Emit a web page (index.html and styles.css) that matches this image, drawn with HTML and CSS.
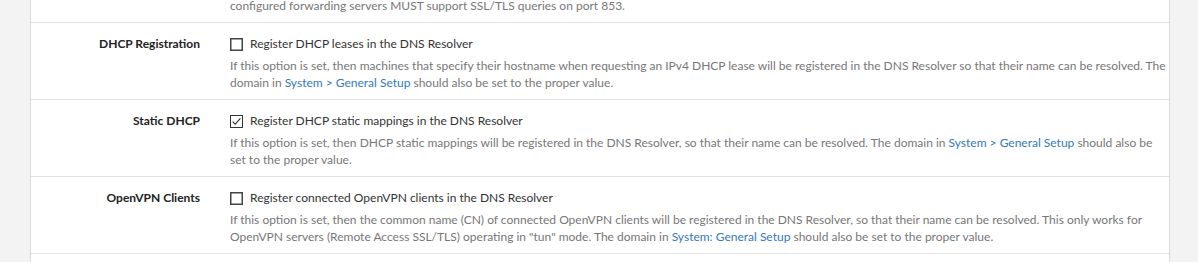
FILE: index.html
```html
<!DOCTYPE html>
<html>
<head>
<meta charset="utf-8">
<link rel="stylesheet" href="styles.css">
</head>
<body>
<div class="page">
  <div class="panel">
    <div class="row row-tail">
      <div class="label"></div>
      <div class="field">
        <p class="help">configured forwarding servers MUST support SSL/TLS queries on port 853.</p>
      </div>
    </div>
    <div class="row">
      <div class="label">DHCP Registration</div>
      <div class="field">
        <label class="check">
          <svg class="box" width="13" height="13" viewBox="0 0 13 13"><rect x="0.75" y="0.75" width="11.5" height="11.5" fill="#fff" stroke="#444" stroke-width="1.5"/></svg>
          Register DHCP leases in the DNS Resolver
        </label>
        <p class="help">If this option is set, then machines that specify their hostname when requesting an IPv4 DHCP lease will be registered in the DNS Resolver so that their name can be resolved. The domain in <a href="#">System &gt; General Setup</a> should also be set to the proper value.</p>
      </div>
    </div>
    <div class="row">
      <div class="label">Static DHCP</div>
      <div class="field">
        <label class="check">
          <svg class="box" width="13" height="13" viewBox="0 0 13 13"><rect x="0.5" y="0.5" width="12" height="12" fill="#fff" stroke="#333" stroke-width="1"/><path d="M2.6 6.6 L5.2 9.2 L10.4 3.4" fill="none" stroke="#333" stroke-width="1.1"/></svg>
          Register DHCP static mappings in the DNS Resolver
        </label>
        <p class="help">If this option is set, then DHCP static mappings will be registered in the DNS Resolver, so that their name can be resolved. The domain in <a href="#">System &gt; General Setup</a> should also be set to the proper value.</p>
      </div>
    </div>
    <div class="row">
      <div class="label">OpenVPN Clients</div>
      <div class="field">
        <label class="check">
          <svg class="box" width="13" height="13" viewBox="0 0 13 13"><rect x="0.75" y="0.75" width="11.5" height="11.5" fill="#fff" stroke="#444" stroke-width="1.5"/></svg>
          Register connected OpenVPN clients in the DNS Resolver
        </label>
        <p class="help">If this option is set, then the common name (CN) of connected OpenVPN clients will be registered in the DNS Resolver, so that their name can be resolved. This only works for OpenVPN servers (Remote Access SSL/TLS) operating in "tun" mode. The domain in <a href="#">System: General Setup</a> should also be set to the proper value.</p>
      </div>
    </div>
    <div class="row row-empty"></div>
  </div>
</div>
</body>
</html>
```
FILE: styles.css
```css
html, body {
  margin: 0;
  padding: 0;
  height: 100%;
  overflow: hidden;
}
body {
  background: #f3f3f3;
  font-family: "Lato", "Open Sans", sans-serif;
  font-size: 12px;
  color: #333;
}
.page {
  padding: 0 28px 0 30px;
  margin-top: -3px;
}
.panel {
  background: #fff;
  border-left: 1px solid #dcdcdc;
  border-right: 1px solid #dcdcdc;
  min-height: 300px;
}
.row {
  display: grid;
  grid-template-columns: 184px 1fr;
  border-top: 1px solid #e3e3e3;
  padding: 11px 0 8px;
}
.row-tail {
  border-top: none;
  padding: 0 0 8px;
}
.row-empty {
  height: 20px;
  padding: 0;
}
.label {
  text-align: right;
  padding-right: 15px;
  font-weight: bold;
  line-height: 20px;
  color: #222;
}
.field {
  padding: 0 1px 0 15px;
}
.check {
  display: flex;
  align-items: center;
  gap: 7px;
  line-height: 20px;
  color: #333;
}
.box {
  display: block;
  flex: none;
}
.help {
  margin: 3px 0 0;
  line-height: 17px;
  color: #777;
}
.row-tail .help {
  margin: 0;
}
a {
  color: #337ab7;
  text-decoration: none;
}
```
